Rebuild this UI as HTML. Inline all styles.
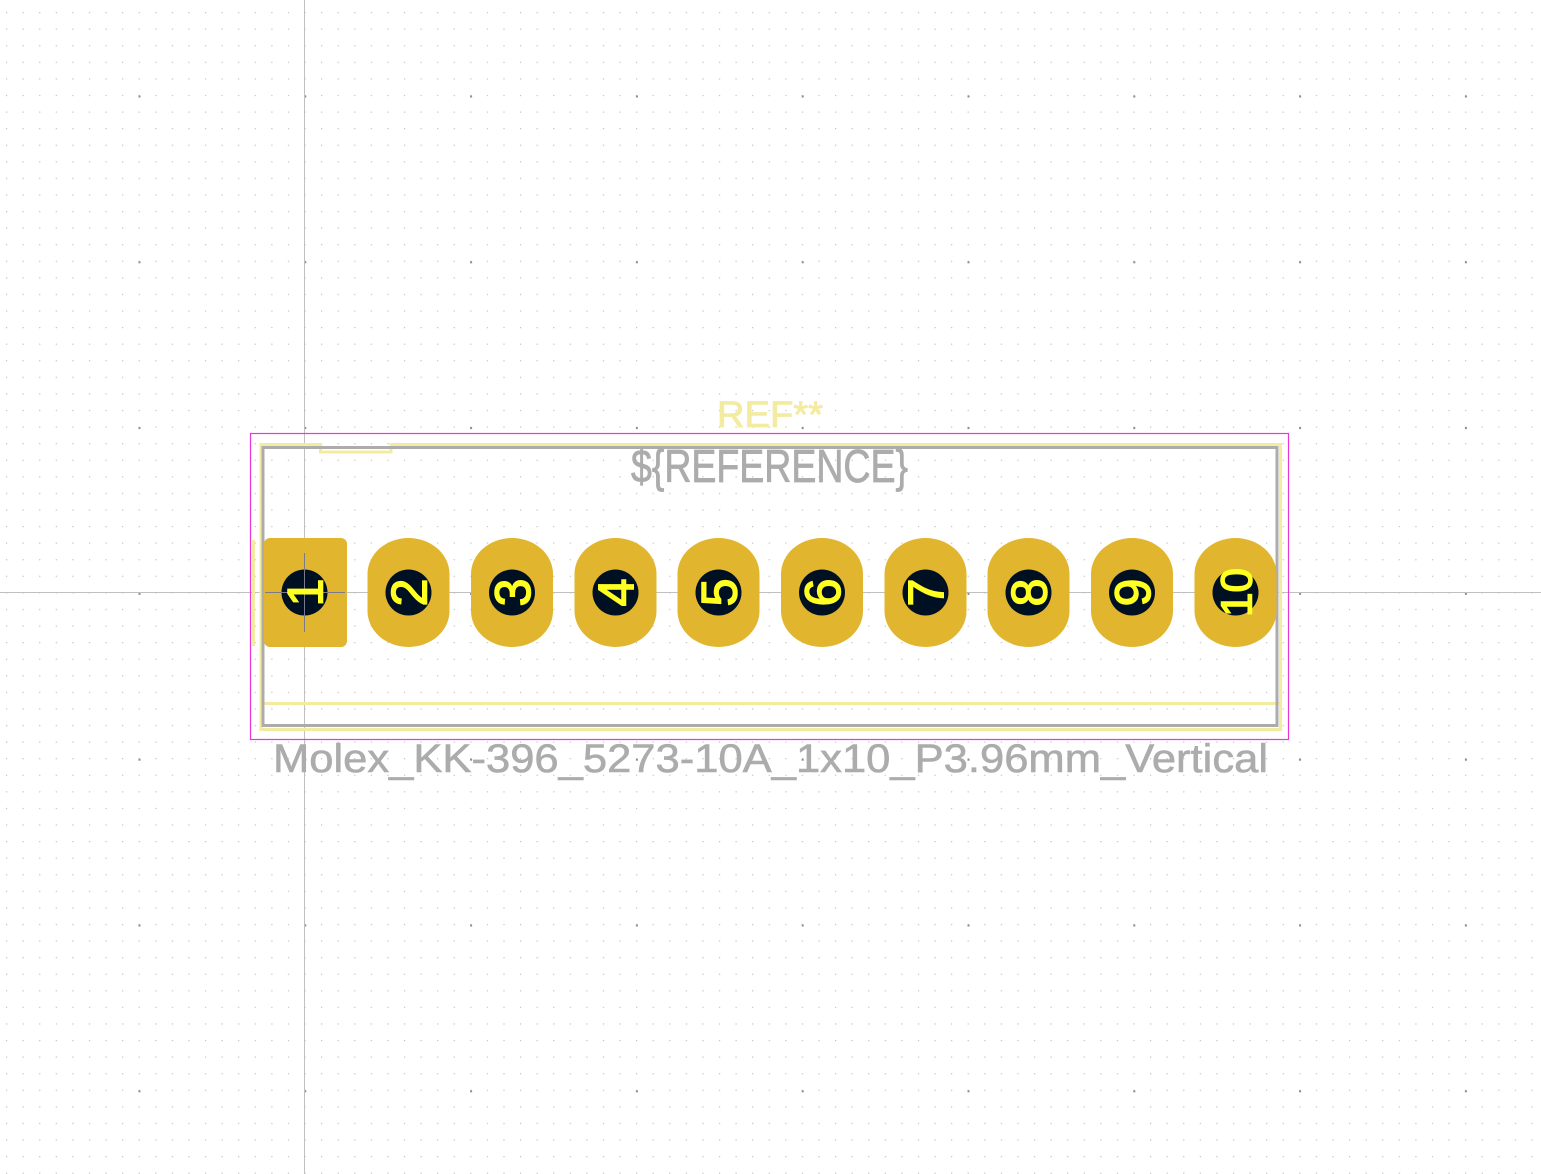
<!DOCTYPE html>
<html><head><meta charset="utf-8"><style>html,body{margin:0;padding:0;background:#fff;width:1541px;height:1174px;overflow:hidden}</style></head>
<body>
<svg width="1541" height="1174" viewBox="0 0 1541 1174" xmlns="http://www.w3.org/2000/svg">
<defs>
<pattern id="m" patternUnits="userSpaceOnUse" x="6" y="12" width="16.58" height="16.58">
<rect x="0" y="0" width="1.2" height="1.2" fill="#c0c0c0"/>
</pattern>
<pattern id="M" patternUnits="userSpaceOnUse" x="138.5" y="95.5" width="165.8" height="165.8">
<rect x="0" y="0" width="2" height="2" fill="#8c8c8c"/>
</pattern>
</defs>
<rect width="1541" height="1174" fill="url(#m)"/>
<rect width="1541" height="1174" fill="url(#M)"/>
<line x1="304.5" y1="0" x2="304.5" y2="1174" stroke="#c0c0c0" stroke-width="1"/>
<line x1="0" y1="592.5" x2="1541" y2="592.5" stroke="#c0c0c0" stroke-width="1"/>
<rect x="250.5" y="433.5" width="1038" height="306" fill="none" stroke="#ee33dd" stroke-width="1.2"/>
<path d="M261 444.5 H320.5 V452 H391 V444.5 H1280.5 V729.5 H261 Z" fill="none" stroke="#f2eba0" stroke-width="3"/>
<line x1="261" y1="703.5" x2="1281" y2="703.5" stroke="#f2eba0" stroke-width="3"/>
<line x1="253.5" y1="540" x2="253.5" y2="646" stroke="#f2eba0" stroke-width="3"/>
<rect x="263" y="447.5" width="1014" height="278" fill="none" stroke="#acacac" stroke-width="3"/>
<g fill="#e2b52e">
<rect x="264" y="538" width="83" height="109" rx="6"/>
<rect x="367.5" y="538" width="82" height="109" rx="41" ry="36"/>
<rect x="471" y="538" width="82" height="109" rx="41" ry="36"/>
<rect x="574.5" y="538" width="82" height="109" rx="41" ry="36"/>
<rect x="677.5" y="538" width="82" height="109" rx="41" ry="36"/>
<rect x="781" y="538" width="82" height="109" rx="41" ry="36"/>
<rect x="884.5" y="538" width="82" height="109" rx="41" ry="36"/>
<rect x="987.5" y="538" width="82" height="109" rx="41" ry="36"/>
<rect x="1091" y="538" width="82" height="109" rx="41" ry="36"/>
<rect x="1194.5" y="538" width="82" height="109" rx="41" ry="36"/>
</g>
<g fill="#001023">
<circle cx="304.5" cy="592.5" r="23"/>
<circle cx="408.5" cy="592.5" r="23"/>
<circle cx="512" cy="592.5" r="23"/>
<circle cx="615.5" cy="592.5" r="23"/>
<circle cx="718.5" cy="592.5" r="23"/>
<circle cx="822" cy="592.5" r="23"/>
<circle cx="925.5" cy="592.5" r="23"/>
<circle cx="1028.5" cy="592.5" r="23"/>
<circle cx="1132" cy="592.5" r="23"/>
<circle cx="1235.5" cy="592.5" r="23"/>
</g>
<line x1="304.5" y1="553" x2="304.5" y2="632" stroke="#7a7a8a" stroke-width="1"/>
<line x1="265" y1="592.5" x2="345" y2="592.5" stroke="#7a7a8a" stroke-width="1"/>
<g font-family="Liberation Sans, sans-serif" font-size="50" fill="#ffff22" stroke="#ffff22" stroke-width="1.5" text-anchor="middle">
<text transform="translate(304.5,592.5) rotate(-90)" y="18">1</text>
<text transform="translate(408.5,592.5) rotate(-90)" y="18">2</text>
<text transform="translate(512,592.5) rotate(-90)" y="18">3</text>
<text transform="translate(615.5,592.5) rotate(-90)" y="18">4</text>
<text transform="translate(718.5,592.5) rotate(-90)" y="18">5</text>
<text transform="translate(822,592.5) rotate(-90)" y="18">6</text>
<text transform="translate(925.5,592.5) rotate(-90)" y="18">7</text>
<text transform="translate(1028.5,592.5) rotate(-90)" y="18">8</text>
<text transform="translate(1132,592.5) rotate(-90)" y="18">9</text>
<text transform="translate(1235.5,592.5) rotate(-90)" y="16" font-size="44">10</text>
</g>
<text x="717" y="427" font-family="Liberation Sans, sans-serif" font-size="37" fill="#f2eba0" stroke="#f2eba0" stroke-width="0.8" textLength="106" lengthAdjust="spacingAndGlyphs">REF**</text>
<text x="631" y="482" font-family="Liberation Sans, sans-serif" font-size="46" fill="#acacac" stroke="#acacac" stroke-width="0.8" textLength="277" lengthAdjust="spacingAndGlyphs">${REFERENCE}</text>
<text x="273" y="772" font-family="Liberation Sans, sans-serif" font-size="40" fill="#acacac" stroke="#acacac" stroke-width="0.6" textLength="995" lengthAdjust="spacingAndGlyphs">Molex_KK-396_5273-10A_1x10_P3.96mm_Vertical</text>
</svg>
</body></html>
